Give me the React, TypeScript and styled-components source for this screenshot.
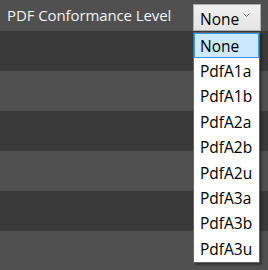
import React from "react";
import styled, { createGlobalStyle } from "styled-components";

const GlobalStyle = createGlobalStyle`
  html, body {
    margin: 0;
    padding: 0;
    background: #3a3a3a;
    overflow: hidden;
  }
  body {
    font-family: "Open Sans", "Noto Sans", sans-serif;
  }
`;

const Page = styled.div`
  position: relative;
  width: 268px;
  height: 270px;
  display: flex;
  flex-direction: column;
  overflow: hidden;
`;

const Header = styled.div`
  display: flex;
  align-items: flex-start;
  justify-content: space-between;
  height: 43px;
  padding: 4px 7px 0 7px;
  box-sizing: border-box;
  background: #505050;
`;

const Label = styled.div`
  color: #f2f2f2;
  font-size: 15px;
  line-height: 20px;
  padding-top: 1px;
  letter-spacing: -0.1px;
`;

const Combo = styled.div`
  position: relative;
  display: flex;
  align-items: center;
  justify-content: space-between;
  width: 68px;
  height: 27px;
  box-sizing: border-box;
  padding: 2px 10px 0 6px;
  border: 1px solid #adadad;
  background: linear-gradient(#f0f0f0, #e5e5e5);
  color: #000;
  font-size: 15.5px;
`;

const Chevron = styled.svg`
  width: 7px;
  height: 5px;
  margin-top: -7px;
`;

const Stripe = styled.div<{ $light?: boolean }>`
  height: 40px;
  flex-shrink: 0;
  background: ${({ $light }) => ($light ? "#505050" : "#3a3a3a")};
`;

const Menu = styled.ul`
  position: absolute;
  left: 193px;
  top: 32px;
  width: 67px;
  margin: 0;
  padding: 0;
  list-style: none;
  box-sizing: border-box;
  background: #fff;
  border: 1px solid #646464;
  box-shadow: 2px 2px 2px rgba(0, 0, 0, 0.35);
`;

const Item = styled.li<{ $selected?: boolean }>`
  height: 25.4px;
  box-sizing: border-box;
  padding-left: 5px;
  display: flex;
  align-items: center;
  font-size: 15.5px;
  color: #000;
  border: 1px solid ${({ $selected }) => ($selected ? "#3399ff" : "transparent")};
  background: ${({ $selected }) => ($selected ? "#cce8ff" : "transparent")};
`;

const levels = [
  "None",
  "PdfA1a",
  "PdfA1b",
  "PdfA2a",
  "PdfA2b",
  "PdfA2u",
  "PdfA3a",
  "PdfA3b",
  "PdfA3u",
];

export default function App() {
  return (
    <>
      <GlobalStyle />
      <Page>
        <Header>
          <Label>PDF Conformance Level</Label>
          <Combo>
            <span>None</span>
            <Chevron viewBox="0 0 7 5">
              <path d="M0.5 0.5 L3.5 3.5 L6.5 0.5" fill="none" stroke="#6a6a6a" strokeWidth="1" />
            </Chevron>
          </Combo>
        </Header>
        <Stripe />
        <Stripe $light />
        <Stripe />
        <Stripe $light />
        <Stripe />
        <Stripe $light />
        <Menu>
          {levels.map((l, i) => (
            <Item key={l} $selected={i === 0}>
              {l}
            </Item>
          ))}
        </Menu>
      </Page>
    </>
  );
}
